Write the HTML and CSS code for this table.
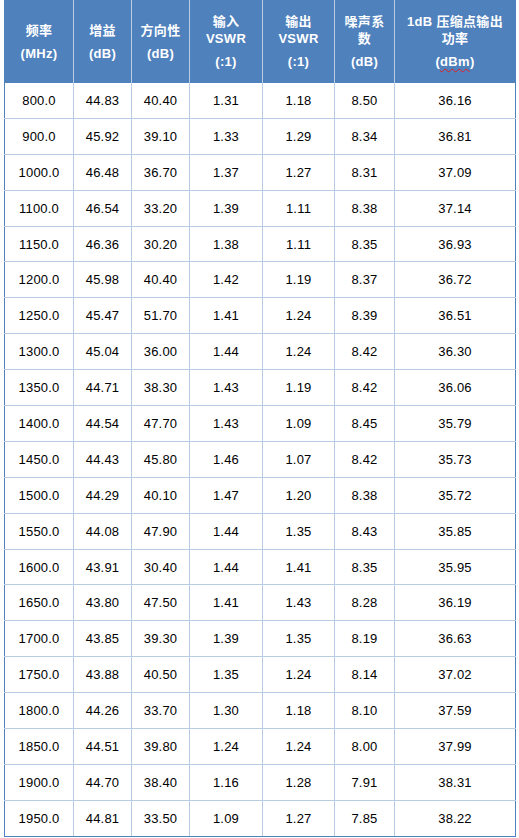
FILE: index.html
```html
<!DOCTYPE html>
<html lang="zh">
<head>
<meta charset="utf-8">
<link rel="stylesheet" href="styles.css">
</head>
<body>
<div class="wrap">
<table class="spec">
<colgroup>
<col style="width:69px"><col style="width:58px"><col style="width:58px"><col style="width:73px"><col style="width:72px"><col style="width:60px"><col style="width:121px">
</colgroup>
<thead>
<tr>
<th><span class="l">频率</span><span class="u">(MHz)</span></th>
<th><span class="l">增益</span><span class="u">(dB)</span></th>
<th><span class="l">方向性</span><span class="u">(dB)</span></th>
<th><span class="l">输入</span><span class="l">VSWR</span><span class="u">(:1)</span></th>
<th><span class="l">输出</span><span class="l">VSWR</span><span class="u">(:1)</span></th>
<th><span class="l">噪声系</span><span class="l">数</span><span class="u">(dB)</span></th>
<th><span class="l">1dB 压缩点输出</span><span class="l">功率</span><span class="u">(<span class="spell">dBm</span>)</span></th>
</tr>
</thead>
<tbody>
<tr><td>800.0</td><td>44.83</td><td>40.40</td><td>1.31</td><td>1.18</td><td>8.50</td><td>36.16</td></tr>
<tr><td>900.0</td><td>45.92</td><td>39.10</td><td>1.33</td><td>1.29</td><td>8.34</td><td>36.81</td></tr>
<tr><td>1000.0</td><td>46.48</td><td>36.70</td><td>1.37</td><td>1.27</td><td>8.31</td><td>37.09</td></tr>
<tr><td>1100.0</td><td>46.54</td><td>33.20</td><td>1.39</td><td>1.11</td><td>8.38</td><td>37.14</td></tr>
<tr><td>1150.0</td><td>46.36</td><td>30.20</td><td>1.38</td><td>1.11</td><td>8.35</td><td>36.93</td></tr>
<tr><td>1200.0</td><td>45.98</td><td>40.40</td><td>1.42</td><td>1.19</td><td>8.37</td><td>36.72</td></tr>
<tr><td>1250.0</td><td>45.47</td><td>51.70</td><td>1.41</td><td>1.24</td><td>8.39</td><td>36.51</td></tr>
<tr><td>1300.0</td><td>45.04</td><td>36.00</td><td>1.44</td><td>1.24</td><td>8.42</td><td>36.30</td></tr>
<tr><td>1350.0</td><td>44.71</td><td>38.30</td><td>1.43</td><td>1.19</td><td>8.42</td><td>36.06</td></tr>
<tr><td>1400.0</td><td>44.54</td><td>47.70</td><td>1.43</td><td>1.09</td><td>8.45</td><td>35.79</td></tr>
<tr><td>1450.0</td><td>44.43</td><td>45.80</td><td>1.46</td><td>1.07</td><td>8.42</td><td>35.73</td></tr>
<tr><td>1500.0</td><td>44.29</td><td>40.10</td><td>1.47</td><td>1.20</td><td>8.38</td><td>35.72</td></tr>
<tr><td>1550.0</td><td>44.08</td><td>47.90</td><td>1.44</td><td>1.35</td><td>8.43</td><td>35.85</td></tr>
<tr><td>1600.0</td><td>43.91</td><td>30.40</td><td>1.44</td><td>1.41</td><td>8.35</td><td>35.95</td></tr>
<tr><td>1650.0</td><td>43.80</td><td>47.50</td><td>1.41</td><td>1.43</td><td>8.28</td><td>36.19</td></tr>
<tr><td>1700.0</td><td>43.85</td><td>39.30</td><td>1.39</td><td>1.35</td><td>8.19</td><td>36.63</td></tr>
<tr><td>1750.0</td><td>43.88</td><td>40.50</td><td>1.35</td><td>1.24</td><td>8.14</td><td>37.02</td></tr>
<tr><td>1800.0</td><td>44.26</td><td>33.70</td><td>1.30</td><td>1.18</td><td>8.10</td><td>37.59</td></tr>
<tr><td>1850.0</td><td>44.51</td><td>39.80</td><td>1.24</td><td>1.24</td><td>8.00</td><td>37.99</td></tr>
<tr><td>1900.0</td><td>44.70</td><td>38.40</td><td>1.16</td><td>1.28</td><td>7.91</td><td>38.31</td></tr>
<tr><td>1950.0</td><td>44.81</td><td>33.50</td><td>1.09</td><td>1.27</td><td>7.85</td><td>38.22</td></tr>
</tbody>
</table>
</div>
</body>
</html>
```

FILE: styles.css
```css
html, body {
  margin: 0;
  padding: 0;
  background: #ffffff;
}
.wrap {
  padding: 0 4px;
}
.spec {
  width: 511px;
  table-layout: fixed;
  border-collapse: collapse;
  font-family: "Liberation Sans", Arial, "Noto Sans CJK SC", sans-serif;
  font-size: 13px;
  color: #000;
}
.spec th {
  height: 83px;
  padding: 0;
  background: #4f81bd;
  color: #ffffff;
  font-weight: bold;
  text-align: center;
  vertical-align: middle;
  border-right: 1px solid #b8cce4;
  letter-spacing: 0.3px;
}
.spec th:first-child {
  border-left: 1px solid #4f81bd;
}
.spec th:last-child {
  border-right: 1px solid #4f81bd;
}
.spec th .l,
.spec th .u {
  display: block;
  line-height: 17px;
}
.spec th .u {
  margin-top: 6px;
}
.spell {
  text-decoration: underline wavy #e02020;
  text-decoration-thickness: 1px;
  text-underline-offset: 2px;
}
.spec td {
  height: 34.9px;
  padding: 0;
  text-align: center;
  vertical-align: middle;
  border: 1px solid #b8cce4;
  letter-spacing: 0.2px;
}
.spec td:first-child {
  border-left: 1px solid #4f81bd;
}
.spec td:last-child {
  border-right: 1px solid #4f81bd;
}
.spec tbody tr:first-child td {
  border-top: none;
}
.spec tbody tr:last-child td {
  border-bottom: 1px solid #4f81bd;
}
```
